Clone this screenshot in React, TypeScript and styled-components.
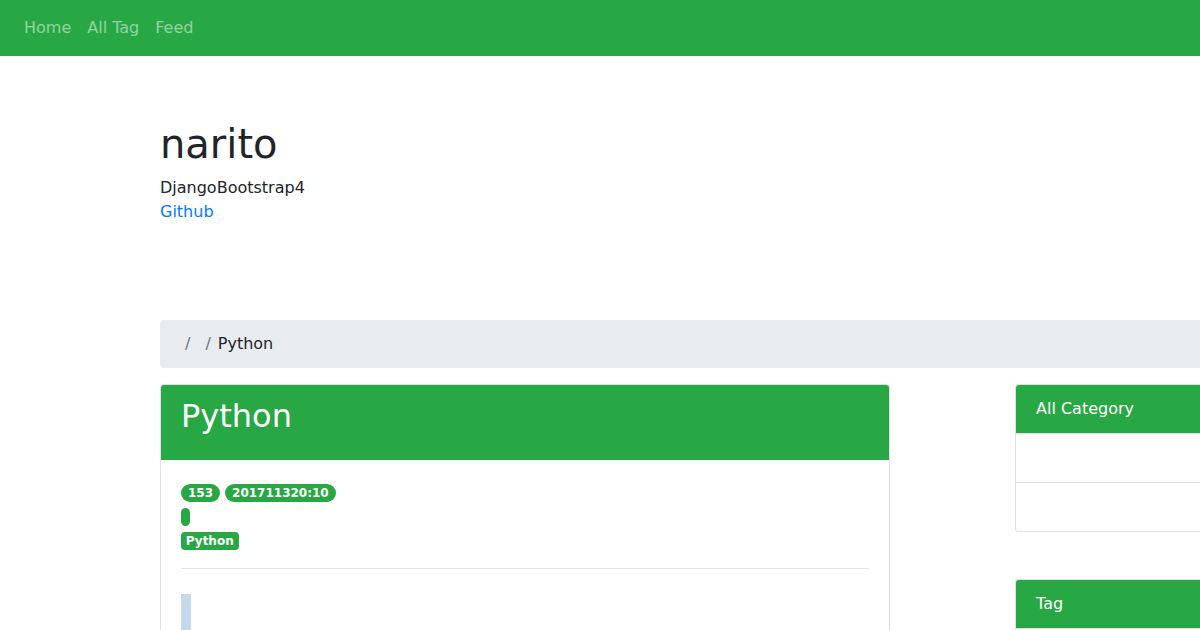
import * as React from 'react';
import styled, { createGlobalStyle } from 'styled-components';

const GREEN = '#28a745';

const GlobalStyle = createGlobalStyle`
  html, body {
    margin: 0;
    padding: 0;
    overflow: hidden;
    background: #fff;
  }
  body {
    font-family: "DejaVu Sans", "Liberation Sans", sans-serif;
    font-size: 16px;
    line-height: 1.5;
    color: #212529;
  }
  * {
    box-sizing: border-box;
  }
`;

const Navbar = styled.nav`
  display: flex;
  align-items: center;
  height: 56px;
  padding: 8px 16px;
  background-color: ${GREEN};
`;

const NavLink = styled.a`
  padding: 8px;
  color: rgba(255, 255, 255, 0.5);
  text-decoration: none;
`;

const Jumbotron = styled.header`
  padding: 64px 0 64px 160px;
  margin-bottom: 32px;
`;

const SiteTitle = styled.h1`
  margin: 0 0 8px;
  font-size: 40px;
  font-weight: 400;
  line-height: 1.2;
`;

const Lead = styled.p`
  margin: 0;
`;

const Link = styled.a`
  color: #007bff;
  text-decoration: none;
`;

const Container = styled.main`
  width: 1300px;
  margin-left: 160px;
`;

const Breadcrumb = styled.ol`
  display: flex;
  list-style: none;
  margin: 0 0 16px;
  padding: 12px 16px 12px 17px;
  background-color: #e9ecef;
  border-radius: 4px;
`;

const Crumb = styled.li`
  & + &::before {
    display: inline-block;
    padding: 0 7px 0 8px;
    color: #6c757d;
    content: '/';
  }
`;

const Row = styled.div`
  display: flex;
  align-items: flex-start;
  gap: 125px;
`;

const MainColumn = styled.div`
  width: 730px;
  flex-shrink: 0;
`;

const Sidebar = styled.aside`
  width: 400px;
  display: flex;
  flex-direction: column;
  gap: 47px;
`;

const Card = styled.section`
  border: 1px solid rgba(0, 0, 0, 0.125);
  border-radius: 4px;
  overflow: hidden;
  background: #fff;
`;

const PostHeader = styled.div`
  padding: 12px 20px 17px;
  background-color: ${GREEN};
  color: #fff;
`;

const PostTitle = styled.h2`
  margin: 0 0 8px;
  font-size: 32px;
  font-weight: 400;
  line-height: 1.2;
`;

const CardBody = styled.div`
  padding: 20px 20px 40px;
`;

const BadgeLine = styled.div`
  display: flex;
  align-items: center;
  gap: 5px;
  height: 24px;
  padding-top: 1px;
`;

const Badge = styled.span<{ $pill?: boolean; $empty?: boolean }>`
  display: inline-block;
  height: 18px;
  padding: 3px ${(p) => (p.$empty ? '4.5px' : p.$pill ? '7px' : '4.8px')};
  border-radius: ${(p) => (p.$pill ? '10rem' : '4px')};
  background-color: ${GREEN};
  color: #fff;
  font-size: 12px;
  font-weight: 700;
  line-height: 1;
  white-space: nowrap;
`;

const Rule = styled.hr`
  margin: 16px 0 25px;
  border: 0;
  border-top: 1px solid rgba(0, 0, 0, 0.1);
`;

const Highlight = styled.div`
  width: 10px;
  height: 40px;
  background-color: #c5d9ec;
`;

const SideHeader = styled.div`
  padding: 12px 20px;
  background-color: ${GREEN};
  color: #fff;
`;

const ListGroup = styled.ul`
  list-style: none;
  margin: 0;
  padding: 0;
`;

const ListItem = styled.li`
  height: 49px;
  padding: 12px 20px;
  border-top: 1px solid rgba(0, 0, 0, 0.125);
`;

export default function App() {
  return (
    <>
      <GlobalStyle />
      <Navbar>
        <NavLink href="#">Home</NavLink>
        <NavLink href="#">All Tag</NavLink>
        <NavLink href="#">Feed</NavLink>
      </Navbar>

      <Jumbotron>
        <SiteTitle>narito</SiteTitle>
        <Lead>DjangoBootstrap4</Lead>
        <Link href="#">Github</Link>
      </Jumbotron>

      <Container>
        <Breadcrumb>
          <Crumb />
          <Crumb />
          <Crumb>Python</Crumb>
        </Breadcrumb>

        <Row>
          <MainColumn>
            <Card>
              <PostHeader>
                <PostTitle>Python</PostTitle>
              </PostHeader>
              <CardBody>
                <BadgeLine>
                  <Badge $pill>153</Badge>
                  <Badge $pill>201711320:10</Badge>
                </BadgeLine>
                <BadgeLine>
                  <Badge $pill $empty />
                </BadgeLine>
                <BadgeLine>
                  <Badge>Python</Badge>
                </BadgeLine>
                <Rule />
                <Highlight />
              </CardBody>
            </Card>
          </MainColumn>

          <Sidebar>
            <Card>
              <SideHeader>All Category</SideHeader>
              <ListGroup>
                <ListItem />
                <ListItem />
              </ListGroup>
            </Card>
            <Card>
              <SideHeader>Tag</SideHeader>
              <ListGroup>
                <ListItem />
                <ListItem />
              </ListGroup>
            </Card>
          </Sidebar>
        </Row>
      </Container>
    </>
  );
}
